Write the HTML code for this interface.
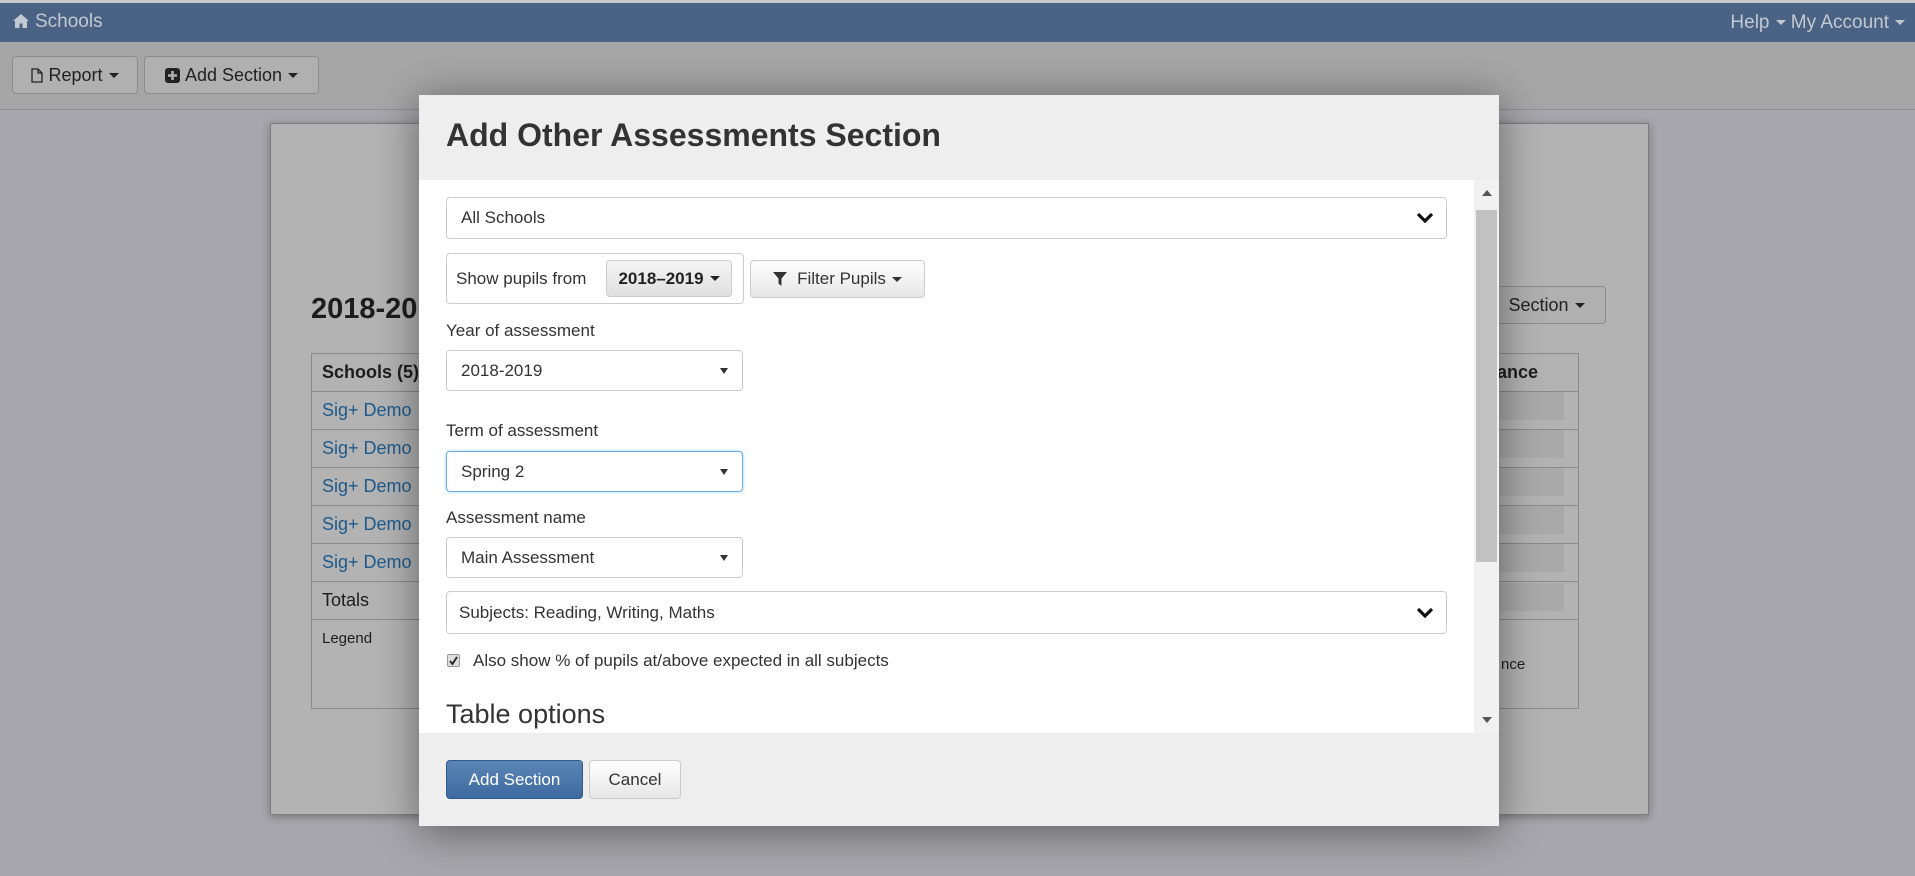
<!DOCTYPE html>
<html><head><meta charset="utf-8"><style>
*{box-sizing:border-box;margin:0;padding:0}
body{width:1915px;height:876px;overflow:hidden;background:#a7a6ac;font-family:"Liberation Sans",sans-serif;font-size:17px;color:#333;position:relative}
.abs{position:absolute}
.top{left:0;top:0;width:1915px;height:4px;background:#c9c9c9}
.nav{left:0;top:3px;width:1915px;height:39px;background:#4a6283;color:#c3c9d3;font-size:19px}
.tool{left:0;top:42px;width:1915px;height:68px;background:#a6a6a6;border-bottom:1px solid #8f8f8f}
.gbtn{position:absolute;background:#b0b0b0;border:1px solid #8c8c8c;border-radius:4px;color:#222;font-size:18px;display:flex;align-items:center;justify-content:center}
.caret{display:inline-block;width:0;height:0;border-left:5px solid transparent;border-right:5px solid transparent;border-top:5px solid currentColor;margin-left:6px;vertical-align:middle}
.panel{left:270px;top:123px;width:1379px;height:692px;background:#b3b3b3;border:1px solid #7d7d7d;box-shadow:0 2px 8px rgba(0,0,0,.3)}
table.t{position:absolute;left:311px;top:353px;width:1267px;border-collapse:collapse;table-layout:fixed;font-size:18px;color:#1d1d1d}
.t td{border:1px solid #8a8a8a;height:38px;padding:0 10px;white-space:nowrap;overflow:hidden}
.t a{color:#1e5a8c}
.bar{position:absolute;left:1487px;width:77px;height:28px;background:#a9a9a9}
.modal{left:419px;top:95px;width:1080px;height:731px;background:#eee;box-shadow:0 5px 40px rgba(0,0,0,.45)}
.mbody{position:absolute;left:0;top:85px;width:1080px;height:553px;background:#fff;overflow:hidden}
.inp{position:absolute;border:1px solid #ccc;border-radius:4px;background:#fff;color:#333;font-size:17px;display:flex;align-items:center;padding-left:14px}
.lbl{position:absolute;font-size:17px;color:#333}
.chev{position:absolute;right:12px;top:50%;margin-top:-7px}
.tri{position:absolute;right:14px;top:50%;margin-top:-3px;border-left:4px solid transparent;border-right:4px solid transparent;border-top:6px solid #333}
.btn{position:absolute;border:1px solid #ccc;border-radius:4px;background:linear-gradient(#fff,#e6e6e6);font-size:17px;color:#333;display:flex;align-items:center;justify-content:center}
</style></head><body>
<div class="abs top"></div>
<div class="abs nav">
 <svg class="abs" style="left:13px;top:11px" width="16" height="14" viewBox="0 0 16 14"><path d="M8 0L0 7h2v7h4.5V9.5h3V14H14V7h2z" fill="#c3c9d3"/></svg>
 <span class="abs" style="left:35px;top:8px">Schools</span>
 <span class="abs" style="right:10px;top:9px">Help<span class="caret"></span> My Account<span class="caret"></span></span>
</div>
<div class="abs tool"></div>
<div class="gbtn" style="left:12px;top:56px;width:126px;height:38px"><svg width="12" height="15" viewBox="0 0 12 15" style="margin-right:5px"><path d="M1 1h6l4 4v9H1z M7 1v4h4" fill="none" stroke="#222" stroke-width="1.3"/></svg>Report<span class="caret"></span></div>
<div class="gbtn" style="left:144px;top:56px;width:175px;height:38px"><svg width="15" height="15" viewBox="0 0 15 15" style="margin-right:5px"><rect x="0" y="0" width="15" height="15" rx="3" fill="#222"/><path d="M7.5 3v9M3 7.5h9" stroke="#b0b0b0" stroke-width="2.6"/></svg>Add Section<span class="caret"></span></div>

<div class="abs panel"></div>
<div class="abs" style="left:311px;top:293px;font-size:29px;font-weight:bold;color:#1d1d1d">2018-2019</div>
<div class="gbtn" style="left:1487px;top:286px;width:119px;height:38px">Section<span class="caret"></span></div>
<table class="t">
<colgroup><col style="width:1180px"><col style="width:87px"></colgroup>
<tr><td style="font-weight:bold;height:36px">Schools (5)</td><td style="font-weight:bold;padding-left:5px">ance</td></tr>
<tr><td><a>Sig+ Demo</a></td><td></td></tr>
<tr><td><a>Sig+ Demo</a></td><td></td></tr>
<tr><td><a>Sig+ Demo</a></td><td></td></tr>
<tr><td><a>Sig+ Demo</a></td><td></td></tr>
<tr><td><a>Sig+ Demo</a></td><td></td></tr>
<tr><td>Totals</td><td></td></tr>
<tr><td style="height:89px;vertical-align:top;padding-top:10px;font-size:15px">Legend</td><td style="font-size:15px;padding-left:9px">nce</td></tr>
</table>
<div class="bar" style="top:392px"></div><div class="bar" style="top:430px"></div><div class="bar" style="top:468px"></div><div class="bar" style="top:506px"></div><div class="bar" style="top:544px"></div><div class="bar" style="top:583px"></div>

<div class="abs modal">
 <div class="abs" style="left:27px;top:22px;font-size:32px;font-weight:bold;color:#333">Add Other Assessments Section</div>
 <div class="mbody">
  <div class="inp" style="left:27px;top:17px;width:1001px;height:42px">All Schools<svg class="chev" width="18" height="14" viewBox="0 0 18 14"><path d="M2 3l7 7 7-7" fill="none" stroke="#111" stroke-width="3.2"/></svg></div>
  <div class="inp" style="left:27px;top:73px;width:298px;height:51px;padding-left:9px;color:#333">Show pupils from</div>
  <div class="btn" style="left:187px;top:80px;width:126px;height:37px;font-weight:bold;color:#222;background:linear-gradient(#f4f4f4,#e0e0e0)">2018–2019<span class="caret"></span></div>
  <div class="btn" style="left:331px;top:80px;width:175px;height:38px"><svg width="14" height="14" viewBox="0 0 14 14" style="margin-right:10px"><path d="M0 0h14L8.5 6.5V14L5.5 11.5V6.5z" fill="#333"/></svg>Filter Pupils<span class="caret"></span></div>
  <div class="lbl" style="left:27px;top:141px">Year of assessment</div>
  <div class="inp" style="left:27px;top:170px;width:297px;height:41px">2018-2019<div class="tri"></div></div>
  <div class="lbl" style="left:27px;top:241px">Term of assessment</div>
  <div class="inp" style="left:27px;top:271px;width:297px;height:41px;border-color:#66afe9;box-shadow:0 0 3px rgba(102,175,233,.6)">Spring 2<div class="tri"></div></div>
  <div class="lbl" style="left:27px;top:328px">Assessment name</div>
  <div class="inp" style="left:27px;top:357px;width:297px;height:41px">Main Assessment<div class="tri"></div></div>
  <div class="inp" style="left:27px;top:411px;width:1001px;height:43px;padding-left:12px">Subjects: Reading, Writing, Maths<svg class="chev" width="18" height="14" viewBox="0 0 18 14"><path d="M2 3l7 7 7-7" fill="none" stroke="#111" stroke-width="3.2"/></svg></div>
  <div class="abs" style="left:28px;top:474px;width:13px;height:13px;border:1px solid #999;border-radius:2px;background:#ddd"><svg width="11" height="11" viewBox="0 0 11 11" style="position:absolute;left:0;top:0"><path d="M2 6l2.5 3L9 2" fill="none" stroke="#222" stroke-width="1.8"/></svg></div>
  <div class="lbl" style="left:54px;top:471px">Also show % of pupils at/above expected in all subjects</div>
  <div class="lbl" style="left:27px;top:519px;font-size:27px">Table options</div>
  <div class="abs" style="left:1055px;top:0;width:25px;height:553px;background:#f1f1f1"></div>
  <div class="abs" style="left:1057px;top:30px;width:21px;height:352px;background:#c1c1c1"></div>
  <div class="abs" style="left:1063px;top:10px;border-left:5px solid transparent;border-right:5px solid transparent;border-bottom:6px solid #555"></div>
  <div class="abs" style="left:1063px;top:537px;border-left:5px solid transparent;border-right:5px solid transparent;border-top:6px solid #555"></div>
 </div>
 <div class="btn" style="left:27px;top:665px;width:137px;height:39px;background:linear-gradient(#5b85b6,#3d6aa0);border-color:#2e5a8c;color:#fff">Add Section</div>
 <div class="btn" style="left:170px;top:665px;width:92px;height:39px">Cancel</div>
</div>
</body></html>
